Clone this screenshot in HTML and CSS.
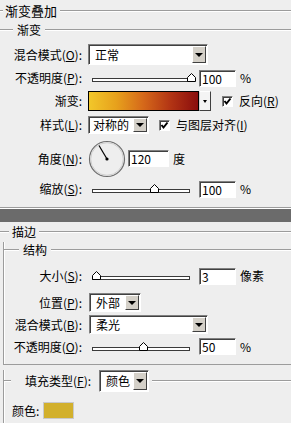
FILE: index.html
```html
<!DOCTYPE html>
<html lang="zh-CN">
<head>
    <meta charset="UTF-8">
    <title>渐变叠加</title>
    <link rel="stylesheet" href="styles.css">
</head>
<body>
    <!-- 渐变叠加 -->
    <div class="title"><span class="rule stub-3"></span><span class="cap big">渐变叠加</span><span class="rule"></span></div>
    <div class="legend"><span class="rule stub-13"></span><span class="cap">渐变</span><span class="rule"></span></div>

    <div class="row r1">
        <label class="lbl">混合模式(<u>O</u>):</label>
        <div class="select s-wide"><span class="val">正常</span><span class="arrow"></span></div>
    </div>
    <div class="row r2">
        <label class="lbl">不透明度(<u>P</u>):</label>
        <div class="slider"><svg class="thumb" style="left: 94px" width="9" height="9" viewBox="0 0 9 9"><path d="M0.5 8.5V4.5L4.5 0.5L8.5 4.5V8.5Z" fill="#fff" stroke="#000"/></svg></div>
        <div class="num">100</div><span class="unit">%</span>
    </div>
    <div class="row r3">
        <label class="lbl">渐变:</label>
        <div class="grad"></div><div class="grad-btn"></div>
        <span class="check c-rev"><svg width="9" height="9" viewBox="0 0 9 9"><path d="M1.5 4L3.5 6.5L7.5 1.5" fill="none" stroke="#000" stroke-width="2"/></svg></span>
        <span class="check-text">反向(<u>R</u>)</span>
    </div>
    <div class="row r4">
        <label class="lbl">样式(<u>L</u>):</label>
        <div class="select s-style"><span class="val">对称的</span><span class="arrow"></span></div>
        <span class="check c-align"><svg width="9" height="9" viewBox="0 0 9 9"><path d="M1.5 4L3.5 6.5L7.5 1.5" fill="none" stroke="#000" stroke-width="2"/></svg></span>
        <span class="check-text">与图层对齐(<u>I</u>)</span>
    </div>
    <div class="row r5">
        <label class="lbl">角度(<u>N</u>):</label>
        <svg class="dial" width="38" height="38" viewBox="0 0 38 38">
            <circle cx="19" cy="19" r="17.5" fill="none" stroke="#6e6e6e" stroke-width="1.2"/>
            <circle cx="19" cy="19" r="16.3" fill="none" stroke="#cfcfcf" stroke-width="1"/>
            <line x1="19" y1="19" x2="11" y2="5.5" stroke="#000" stroke-width="1.2"/>
            <circle cx="19" cy="19" r="1.6" fill="#000"/>
        </svg>
        <div class="num n-angle">120</div><span class="unit">度</span>
    </div>
    <div class="row r6">
        <label class="lbl">缩放(<u>S</u>):</label>
        <div class="slider"><svg class="thumb" style="left: 57px" width="9" height="9" viewBox="0 0 9 9"><path d="M0.5 8.5V4.5L4.5 0.5L8.5 4.5V8.5Z" fill="#fff" stroke="#000"/></svg></div>
        <div class="num">100</div><span class="unit">%</span>
    </div>

    <div class="rule sep"></div>
    <div class="band"></div>

    <!-- 描边 -->
    <div class="title t2"><span class="rule stub-9"></span><span class="cap">描边</span><span class="rule"></span></div>

    <div class="box box-struct">
        <div class="box-head"><span class="rule stub-15"></span><span class="cap">结构</span><span class="rule"></span></div>
        <div class="row b1">
            <label class="lbl">大小(<u>S</u>):</label>
            <div class="slider"><svg class="thumb" style="left: -1px" width="9" height="9" viewBox="0 0 9 9"><path d="M0.5 8.5V4.5L4.5 0.5L8.5 4.5V8.5Z" fill="#fff" stroke="#000"/></svg></div>
            <div class="num">3</div><span class="unit">像素</span>
        </div>
        <div class="row b2">
            <label class="lbl">位置(<u>P</u>):</label>
            <div class="select s-pos"><span class="val">外部</span><span class="arrow"></span></div>
        </div>
        <div class="row b3">
            <label class="lbl">混合模式(<u>B</u>):</label>
            <div class="select s-soft"><span class="val">柔光</span><span class="arrow"></span></div>
        </div>
        <div class="row b4">
            <label class="lbl">不透明度(<u>O</u>):</label>
            <div class="slider"><svg class="thumb" style="left: 46px" width="9" height="9" viewBox="0 0 9 9"><path d="M0.5 8.5V4.5L4.5 0.5L8.5 4.5V8.5Z" fill="#fff" stroke="#000"/></svg></div>
            <div class="num">50</div><span class="unit">%</span>
        </div>
    </div>

    <div class="box box-fill">
        <div class="box-head fill-head">
            <span class="rule stub-7"></span>
            <label class="fill-lbl">填充类型(<u>F</u>):</label>
            <div class="select s-fill"><span class="val">颜色</span><span class="arrow"></span></div>
            <span class="rule"></span>
        </div>
        <div class="row color-row">
            <label class="color-lbl">颜色:</label>
            <div class="swatch"></div>
        </div>
    </div>
</body>
</html>
```

FILE: styles.css
```css
/* 面板基础样式 */
* {
    box-sizing: border-box;
}
body {
    margin: 0;
    width: 291px;
    height: 423px;
    overflow: hidden;
    background-color: #eeeeee;
    color: #000;
    font-family: "Noto Sans CJK SC", "Noto Sans", sans-serif;
    font-size: 12px;
    line-height: 14px;
}
u {
    text-decoration: underline;
    text-underline-offset: 1px;
}

/* 刻线 */
.rule {
    flex: 1;
    height: 2px;
    border-top: 1px solid #9c9c9c;
    border-bottom: 1px solid #ffffff;
}
.stub-3 { flex: 0 0 3px; }
.stub-7 { flex: 0 0 7px; }
.stub-9 { flex: 0 0 9px; }
.stub-13 { flex: 0 0 13px; }
.stub-15 { flex: 0 0 15px; }

.title,
.legend,
.box-head {
    display: flex;
    align-items: center;
}
.title {
    height: 22px;
}
.title .cap {
    padding: 0 3px 0 2px;
}
.cap.big {
    font-size: 13px;
}
.legend {
    height: 16px;
}
.legend .cap,
.box-head .cap {
    padding: 0 4px;
}

/* 行 */
.row {
    display: flex;
    align-items: center;
}
.lbl {
    flex: none;
    width: 82px;
    text-align: right;
    white-space: nowrap;
}
.r1 { margin-top: 6px; height: 21px; }
.r2 { margin-top: 4px; height: 18px; }
.r3 { margin-top: 4px; height: 20px; }
.r4 { margin-top: 5px; height: 18px; }
.r5 { margin-top: 5px; height: 39px; }
.r6 { margin-top: 2px; height: 18px; }

/* 下拉框 */
.select {
    display: flex;
    height: 21px;
    margin-left: 6px;
    background: #fff;
    border: 1px solid;
    border-color: #808080 #ffffff #ffffff #808080;
    box-shadow: inset 1px 1px 0 #404040;
    padding: 1px 1px 1px 1px;
}
.select .val {
    flex: 1;
    padding-left: 5px;
    line-height: 17px;
    white-space: nowrap;
}
.select .arrow {
    flex: none;
    width: 14px;
    background: #d4d0c8;
    border: 1px solid;
    border-color: #ffffff #404040 #404040 #ffffff;
    display: flex;
    align-items: center;
    justify-content: center;
}
.select .arrow::after {
    content: "";
    border-left: 4px solid transparent;
    border-right: 4px solid transparent;
    border-top: 4px solid #000;
}
.s-wide { width: 120px; }
.s-style { width: 61px; height: 18px; }
.s-style .val { line-height: 14px; padding-left: 3px; }
.s-pos { width: 52px; margin-left: 7px; height: 19px; }
.s-pos .val { line-height: 15px; }
.s-soft { width: 119px; margin-left: 7px; height: 19px; }
.s-soft .val { line-height: 15px; }
.s-fill { width: 50px; height: 22px; margin-left: 8px; }

/* 滑块 */
.slider {
    position: relative;
    flex: none;
    width: 98px;
    height: 4px;
    margin-left: 10px;
    margin-top: 4px;
    border: 1px solid #3a3a3a;
    background: #fff;
}
.thumb {
    position: absolute;
    top: -6px;
    display: block;
}

/* 数字框 */
.num {
    flex: none;
    width: 37px;
    height: 17px;
    margin-left: 9px;
    padding-left: 2px;
    background: #fff;
    border: 1px solid;
    border-color: #808080 #ffffff #ffffff #808080;
    box-shadow: inset 1px 1px 0 #404040;
    line-height: 15px;
}
.n-angle {
    width: 41px;
    margin-left: 2px;
}
.unit {
    margin-left: 4px;
}

/* 渐变条 */
.grad {
    flex: none;
    width: 111px;
    height: 20px;
    margin-left: 6px;
    border: 1px solid #000;
    background: linear-gradient(to right, #f2c72a 0%, #e7a11c 25%, #d5681a 50%, #b23414 75%, #8a0d0d 100%);
}
.grad-btn {
    position: relative;
    flex: none;
    width: 12px;
    height: 20px;
    background: #f4f4f4;
    border: 1px solid;
    border-color: #ffffff #404040 #404040 #d0d0d0;
}
.grad-btn::after {
    content: "";
    position: absolute;
    left: 3px;
    top: 8px;
    border-left: 2px solid transparent;
    border-right: 2px solid transparent;
    border-top: 3px solid #000;
}

/* 复选框 */
.check {
    flex: none;
    display: flex;
    align-items: center;
    justify-content: center;
    width: 11px;
    height: 11px;
    background: #fff;
    border: 1px solid;
    border-color: #808080 #ffffff #ffffff #808080;
    box-shadow: inset 1px 1px 0 #404040;
}
.c-rev { margin-left: 11px; }
.c-align { margin-left: 10px; }
.check-text {
    margin-left: 6px;
    white-space: nowrap;
}

.dial {
    flex: none;
    margin-left: 6px;
}

.sep {
    flex: none;
    margin-top: 9px;
}
.band {
    height: 13px;
    background: #6b6b6b;
}
.t2 {
    margin-top: 1px;
    height: 18px;
}
.t2 .cap {
    padding: 0 3px;
}

/* 分组框 */
.box {
    margin-left: 3px;
    border-left: 1px solid #9c9c9c;
    box-shadow: inset 1px 0 0 #ffffff;
}
.box-struct {
    margin-top: 9px;
    padding-bottom: 9px;
    border-bottom: 1px solid #9c9c9c;
}
.box-struct .lbl {
    width: 78px;
}
.box-head {
    height: 16px;
    margin-top: -8px;
}
.b1 { margin-top: 9px; height: 18px; }
.b2 { margin-top: 8px; height: 19px; }
.b3 { margin-top: 3px; height: 19px; }
.b4 { margin-top: 4px; height: 17px; }

.box-fill {
    margin-top: 16px;
    height: 60px;
}
.fill-head {
    height: 22px;
    margin-top: -11px;
}
.fill-lbl {
    margin-left: 14px;
    white-space: nowrap;
}
.fill-head .rule {
    margin-left: 3px;
}
.fill-head .stub-7 {
    margin-left: 0;
}
.color-row {
    margin-top: 10px;
    height: 17px;
}
.color-lbl {
    margin-left: 8px;
}
.swatch {
    width: 31px;
    height: 17px;
    margin-left: 4px;
    background: #d2b02c;
    border: 1px solid #c9c9c9;
}
```
